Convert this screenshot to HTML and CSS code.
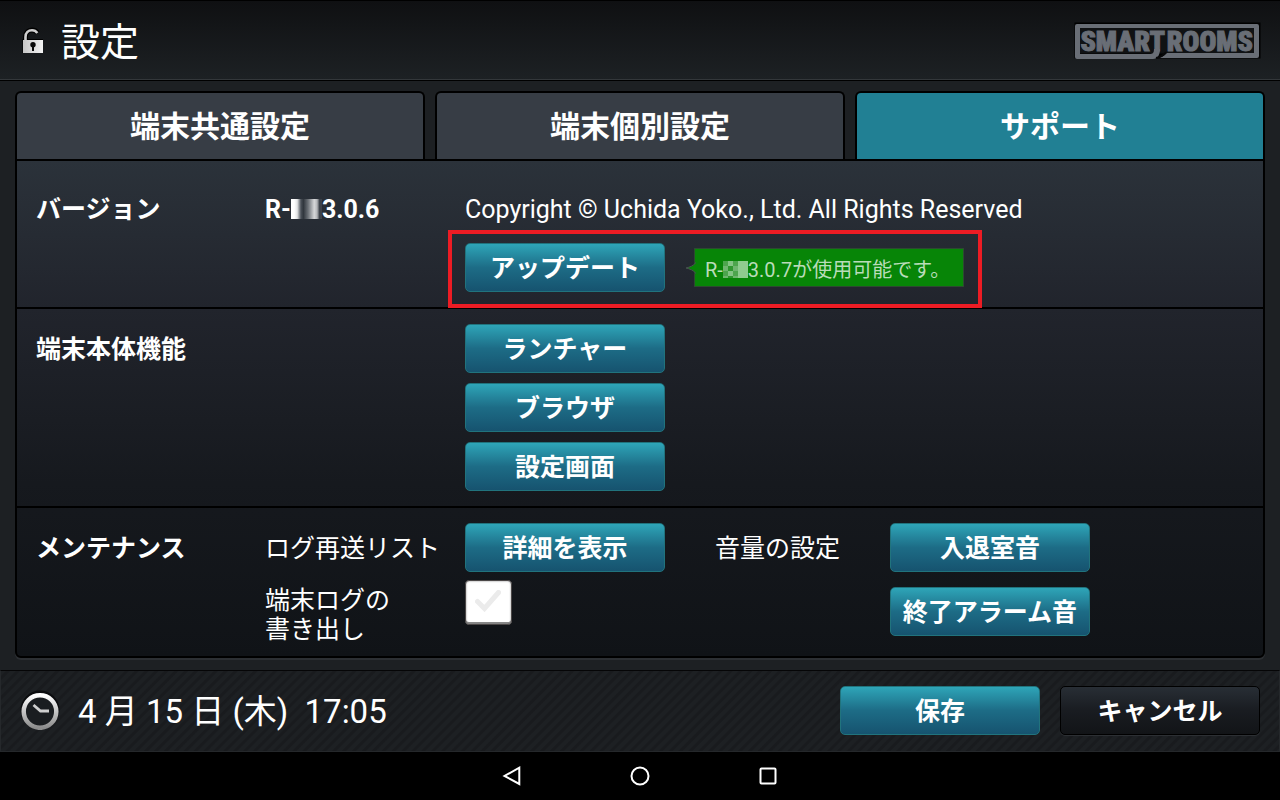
FILE: index.html
```html
<!DOCTYPE html>
<html lang="ja">
<head>
<meta charset="utf-8">
<meta name="viewport" content="width=device-width, initial-scale=1">
<title>設定</title>
<link rel="stylesheet" href="styles.css">
</head>
<body>
<header class="header">
  <svg class="lock" width="24" height="28" viewBox="0 0 24 28" aria-hidden="true">
    <defs><linearGradient id="metal" x1="0" y1="0" x2="1" y2="0"><stop offset="0" stop-color="#c6c6c6"/><stop offset="1" stop-color="#f4f4f4"/></linearGradient></defs>
    <path d="M4.5 13V10C4.500 5.500 7.500 3 11 3c2.500 0 4.200 1 5.500 3" fill="none" stroke="#000" stroke-width="5"/>
    <path d="M1.500 12H22v14H1.500z" fill="#000"/>
    <path d="M4.500 13.500V10C4.500 5.700 7.500 3.200 11 3.200c2.400 0 4 .8 5.300 2.800" fill="none" stroke="#cfcfcf" stroke-width="2.600"/>
    <path d="M2 13H22v13H2z" fill="url(#metal)"/>
    <circle cx="12" cy="17.800" r="2.700" fill="#0b0b0b"/><path d="M11 18h2v6h-2z" fill="#0b0b0b"/>
  </svg>
  <h1 class="title">設定</h1>
  <svg class="logo" width="187" height="38" viewBox="0 0 187 38" role="img" aria-label="SMART ROOMS">
    <rect x="3" y="3" width="181" height="31" fill="#101214" stroke="#000" stroke-width="5"/>
    <path fill-rule="evenodd" fill="#696e76" d="M3 2H183a2 2 0 0 1 2 2V34a2 2 0 0 1-2 2H85c4-1 7-4 8-5H180V6H6V32H75c4 0 5-1 5-5h6c0 5-2 10-7 10H3a2 2 0 0 1-2-2V4a2 2 0 0 1 2-2z"/>
    <path d="M82 36c5-1 8-3 10-6" fill="none" stroke="#08090a" stroke-width="2"/>
    <text class="logo-text" x="91" y="29" text-anchor="end">SMART</text>
    <text class="logo-text" x="179" y="29" text-anchor="end">ROOMS</text>
  </svg>
</header>

<main class="main">
  <nav class="tabs">
    <button class="tab" type="button">端末共通設定</button>
    <button class="tab" type="button">端末個別設定</button>
    <button class="tab tab-active" type="button">サポート</button>
  </nav>
  <div class="panel">
    <section class="row row-version">
      <h2 class="label">バージョン</h2>
      <p class="version">R-<span class="mask"></span>3.0.6</p>
      <div class="version-info">
        <p class="copyright">Copyright © Uchida Yoko., Ltd. All Rights Reserved</p>
        <div class="callout">
          <button class="btn" type="button">アップデート</button>
          <p class="tip">
            <svg class="tip-arrow" width="11" height="14" viewBox="0 0 11 14" aria-hidden="true"><path d="M11 1.500C8 5 5 6 1 7c4 1 7 2 10 5.500" fill="#078507" stroke="#4a4f52"/></svg>
            R-<span class="mask mask-green"></span>3.0.7が使用可能です。
          </p>
        </div>
      </div>
    </section>
    <section class="row">
      <h2 class="label">端末本体機能</h2>
      <div class="stack stack-wide">
        <button class="btn" type="button">ランチャー</button>
        <button class="btn" type="button">ブラウザ</button>
        <button class="btn" type="button">設定画面</button>
      </div>
    </section>
    <section class="row row-maintenance">
      <h2 class="label">メンテナンス</h2>
      <div class="names">
        <p class="name">ログ再送リスト</p>
        <label class="name-two" for="export">端末ログの<br>書き出し</label>
      </div>
      <div class="stack stack-check">
        <button class="btn" type="button">詳細を表示</button>
        <span class="check">
          <input class="check-input" type="checkbox" id="export">
          <svg class="check-mark" width="26" height="22" viewBox="0 0 26 22" aria-hidden="true"><path d="M2.500 11.500 9.500 18.500 23.500 2.500" fill="none" stroke="#ebebeb" stroke-width="5" stroke-linecap="round"/></svg>
        </span>
      </div>
      <p class="name">音量の設定</p>
      <div class="stack stack-sound">
        <button class="btn" type="button">入退室音</button>
        <button class="btn" type="button">終了アラーム音</button>
      </div>
    </section>
  </div>
</main>

<footer class="footer">
  <svg class="clock" width="40" height="40" viewBox="0 0 40 40" aria-hidden="true">
    <defs><linearGradient id="rim" x1="0" y1="0" x2="0" y2="1"><stop offset="0" stop-color="#fff"/><stop offset="1" stop-color="#8c8c8c"/></linearGradient></defs>
    <circle cx="20" cy="20" r="19.500" fill="#0b0c0e"/>
    <circle cx="20" cy="21.500" r="16.300" fill="#1a1d20" stroke="url(#rim)" stroke-width="4.500"/>
    <path d="M13.500 15 20.500 21H29" fill="none" stroke="#cfcfcf" stroke-width="2.800"/>
  </svg>
  <time class="date">4 月 15 日 (木)&nbsp; 17:05</time>
  <div class="actions">
    <button class="btn" type="button">保存</button>
    <button class="btn btn-dark" type="button">キャンセル</button>
  </div>
</footer>

<nav class="system">
  <button class="key" type="button" aria-label="戻る"><svg width="20" height="20" viewBox="0 0 20 20"><path d="M17.300 1.700V18L2.500 10z"/></svg></button>
  <button class="key" type="button" aria-label="ホーム"><svg width="20" height="20" viewBox="0 0 20 20"><circle cx="10" cy="10" r="8.500"/></svg></button>
  <button class="key" type="button" aria-label="履歴"><svg width="20" height="20" viewBox="0 0 20 20"><rect x="2.500" y="2.500" width="15" height="15" rx="1"/></svg></button>
</nav>
</body>
</html>
```
FILE: styles.css
```css
* { box-sizing: border-box; }

body {
  margin: 0;
  min-height: 100vh;
  display: flex;
  flex-direction: column;
  background: #1d2023;
  color: #fff;
  font-family: Roboto, "Noto Sans CJK JP", sans-serif;
  font-size: 25px;
}

h1, h2, p { margin: 0; }

button { font-family: inherit; color: inherit; }

.header {
  display: flex;
  align-items: center;
  height: 81px;
  padding: 0 19px 0 21px;
  border-top: 1px solid #000;
  border-bottom: 1px solid #000;
  background: linear-gradient(#0f1012, #1d2124);
  box-shadow: inset 0 -1px #33373a;
}

.title {
  margin-left: 16px;
  padding-top: 4px;
  font-size: 39px;
  font-weight: 400;
  line-height: 60px;
}

.logo { margin-left: auto; }

.logo-text {
  font-family: "Roboto Condensed", Roboto, sans-serif;
  font-size: 28px;
  font-weight: 900;
  fill: #696e76;
  stroke: #696e76;
}

.main {
  flex: 1;
  display: flex;
  flex-direction: column;
  padding: 10px 15px 12px;
}

.tabs { display: flex; gap: 10px; }

.tab {
  flex: 1;
  height: 68px;
  padding: 0 0 4px;
  border: 2px solid #000;
  border-bottom: 0;
  border-radius: 6px 6px 0 0;
  background: #373d45;
  font-size: 30px;
  font-weight: 700;
}

.tab-active { background: #218094; }

.panel {
  flex: 1;
  border: 2px solid #000;
  border-radius: 0 0 6px 6px;
  background: linear-gradient(#2b323a, #21242c 30%, #16191e 65%, #101317);
  box-shadow: 0 2px #2c2f33;
}

.row {
  display: grid;
  grid-template-columns: 229px 200px 250px 175px 1fr;
  align-items: start;
  padding: 15px 19px;
}

.row + .row { border-top: 2px solid #000; }

.row-version { padding: 23px 19px 0; }

.row-maintenance { padding-bottom: 11px; }

.label, .version, .name {
  font-size: 25px;
  line-height: 51px;
}

.label { font-weight: 700; }

.version { font-weight: 700; }

.mask {
  display: inline-block;
  width: 31px;
  height: 20px;
  vertical-align: -1px;
  background: linear-gradient(90deg, #fff 0 10%, #e4e5e6 20%, #4a5058 32%, #30363d 40%, #6b7076 55%, #d6d7d9 75%, #b5b7ba 84%, #3d424a 92%, #3d424a);
}

.mask-green {
  width: 25px;
  height: 17px;
  background:
    linear-gradient(90deg, transparent 60%, #8fcb8f 60%),
    conic-gradient(#84c384 25%, #2f962f 0 50%, #6fb56f 0 75%, #4da54d 0) 0 0 / 10px 10px;
}

.version-info { grid-column: 3 / -1; }

.copyright { height: 46px; line-height: 52px; }

.callout {
  display: flex;
  align-items: center;
  gap: 29px;
  width: fit-content;
  margin: 0 0 -1px -17px;
  padding: 9px 14px 12px 13px;
  border: 4px solid #ed1c24;
}

.tip {
  position: relative;
  width: 270px;
  height: 39px;
  padding-left: 10px;
  border: 1px solid #2c4a30;
  background: #078507;
  color: #b9dcb9;
  font-size: 20px;
  line-height: 43px;
  white-space: nowrap;
}

.tip-arrow { position: absolute; left: -10px; top: 12px; }

.stack { display: flex; flex-direction: column; align-items: flex-start; gap: 10px; }

.stack-wide { grid-column: 3; }
.stack-check { gap: 8px; }
.stack-sound { gap: 15px; }

.btn {
  width: 200px;
  height: 49px;
  padding: 0 0 3px;
  border: 1px solid #21737d;
  border-radius: 5px;
  background: linear-gradient(#2ea5b8, #1d6c86 50%, #16536f);
  font-size: 25px;
  font-weight: 700;
}

.btn-dark {
  border-color: #000;
  background: linear-gradient(#282e35, #191c21 50%, #121417);
  box-shadow: 0 1px #2c2f33;
}

.name-two { display: block; margin-top: 12px; line-height: 29px; }

.check { position: relative; display: flex; }

.check-input {
  appearance: none;
  width: 47px;
  height: 45px;
  margin: 0;
  border: 1px solid #4b4747;
  border-radius: 4px;
  background: #fff;
  box-shadow: inset 0 0 2px #777, inset 0 -2px #8a8a8a;
}

.check-mark { position: absolute; left: 10px; top: 10px; pointer-events: none; }

.footer {
  display: flex;
  align-items: center;
  height: 82px;
  padding: 0 19px 2px;
  border: 1px solid #25282b;
  border-top-color: #050506;
  background: repeating-linear-gradient(135deg, #1d2023 0 3px, #191b1e 4px 6px, #1d2023 7px);
}

.date {
  margin-left: 18px;
  padding-bottom: 3px;
  font-size: 33px;
}

.actions { display: flex; gap: 20px; margin-left: auto; }

.system {
  display: flex;
  justify-content: center;
  align-items: center;
  gap: 88px;
  height: 48px;
  background: #000;
}

.key {
  display: grid;
  place-items: center;
  width: 40px;
  height: 40px;
  padding: 0;
  border: 0;
  background: none;
}

.key svg { fill: none; stroke: #fff; stroke-width: 2; }
```
